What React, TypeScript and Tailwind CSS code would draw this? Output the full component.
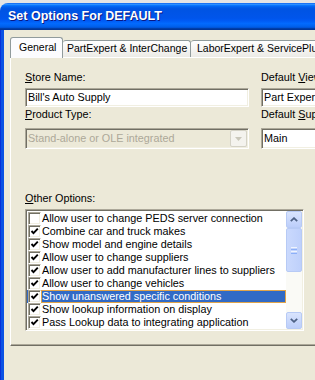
import React from "react";

const options: [string, boolean][] = [
  ["Allow user to change PEDS server connection", false],
  ["Combine car and truck makes", true],
  ["Show model and engine details", true],
  ["Allow user to change suppliers", true],
  ["Allow user to add manufacturer lines to suppliers", true],
  ["Allow user to change vehicles", true],
  ["Show unanswered specific conditions", true],
  ["Show lookup information on display", true],
  ["Pass Lookup data to integrating application", true],
];

const sunken =
  "border border-t-[#ACA899] border-l-[#ACA899] border-b-white border-r-white shadow-[inset_1px_1px_0_#716F64,inset_-1px_-1px_0_#F1EFE2]";

function Label({ hot, rest, className = "" }: { hot: string; rest: string; className?: string }) {
  return (
    <div className={`h-[12px] leading-[12px] text-black ${className}`}>
      <span className="underline underline-offset-[1px]">{hot}</span>
      {rest}
    </div>
  );
}

function Check({ checked }: { checked: boolean }) {
  return (
    <div className={`h-[13px] w-[13px] shrink-0 bg-white ${sunken} flex items-center justify-center`}>
      {checked && (
        <svg width="9" height="9" viewBox="0 0 9 9">
          <path d="M1.5 4 L3.5 6.2 L7.8 1.6" fill="none" stroke="#000" strokeWidth="1.9" />
        </svg>
      )}
    </div>
  );
}

function ScrollButton({ up }: { up: boolean }) {
  return (
    <div className="h-[17px] w-[16px] rounded-[2px] border border-[#B7CAF5] bg-[linear-gradient(to_bottom,#D9E4FD,#BCCEFA)] flex items-center justify-center">
      <svg width="8" height="5" viewBox="0 0 8 5">
        <path
          d={up ? "M0.8 4.2 L4 1.2 L7.2 4.2" : "M0.8 0.8 L4 3.8 L7.2 0.8"}
          fill="none"
          stroke="#4D6185"
          strokeWidth="1.8"
        />
      </svg>
    </div>
  );
}

export default function App() {
  return (
    <div className="h-[380px] w-[315px] overflow-hidden bg-[#E4E4E4] pt-[3px] font-['Liberation_Sans',Arial,sans-serif] text-[10.8px]">
      <div className="flex h-full w-[420px] flex-col">
        {/* title bar */}
        <div className="flex h-[27px] shrink-0 items-center rounded-tl-[8px] bg-[linear-gradient(to_bottom,#0058EE_0%,#3593FF_4%,#288EFF_6%,#127DFF_8%,#036FFC_10%,#0262EE_14%,#0057E5_20%,#0054E3_24%,#0055EB_56%,#005BF5_66%,#026AFE_76%,#0062EF_86%,#0052D6_92%,#0040AB_94%,#003092_100%)] pl-[8px]">
          <span className="text-[12.5px] font-bold text-white [text-shadow:1px_1px_0_#0A1883]">
            Set Options For DEFAULT
          </span>
        </div>

        <div className="flex flex-1">
          <div className="w-[4px] shrink-0 border-l border-[#0831D9] bg-[#0B52E4]" />
          <div className="flex-1 bg-[#ECE9D8] pl-[6px] pt-[7px]">
            {/* tabs */}
            <div className="flex h-[20px] items-end whitespace-nowrap text-[10.5px]">
              <div className="relative z-10 -mb-px flex h-[21px] w-[53px] items-center rounded-t-[3px] border border-b-0 border-[#919B9C] bg-[#FCFCFE] pl-[8px] text-black">
                General
              </div>
              <div className="flex h-[17px] w-[128px] items-center rounded-t-[3px] border border-b-0 border-l-0 border-[#919B9C] bg-[linear-gradient(to_bottom,#FFFFFF,#ECEBE6)] pl-[4px] text-black">
                PartExpert &amp; InterChange
              </div>
              <div className="flex h-[17px] w-[160px] items-center rounded-t-[3px] border border-b-0 border-l-0 border-[#919B9C] bg-[linear-gradient(to_bottom,#FFFFFF,#ECEBE6)] pl-[6px] text-black">
                LaborExpert &amp; ServicePlus
              </div>
            </div>

            {/* panel */}
            <div className="h-[289px] border-l border-t border-b border-l-white border-t-white border-b-[#716F64] shadow-[inset_0_-1px_0_#ACA899] pl-[14px] pt-[13px]">
              <div className="flex gap-[12px]">
                <div className="w-[224px]">
                  <Label hot="S" rest="tore Name:" />
                  <div className={`mt-[5px] flex h-[19px] items-center bg-white pl-[2px] ${sunken}`}>
                    Bill's Auto Supply
                  </div>
                  <Label hot="P" rest="roduct Type:" className="mt-[1px]" />
                  <div className={`mt-[8px] flex h-[21px] items-center bg-[#ECE9D8] pl-[2px] pr-[1px] text-[#ACA899] ${sunken}`}>
                    <span className="flex-1">Stand-alone or OLE integrated</span>
                    <div className="flex h-[17px] w-[17px] items-center justify-center rounded-[2px] border border-[#D4D2C6] bg-[#F4F3EE]">
                      <svg width="7" height="4" viewBox="0 0 7 4">
                        <path d="M0 0 H7 L3.5 4 Z" fill="#C9C7BA" />
                      </svg>
                    </div>
                  </div>
                </div>
                <div className="w-[120px] whitespace-nowrap">
                  <div className="h-[12px] leading-[12px] text-black">
                    Default <span className="underline underline-offset-[1px]">V</span>iew
                  </div>
                  <div className={`mt-[5px] flex h-[19px] items-center bg-white pl-[2px] ${sunken}`}>
                    Part Expert
                  </div>
                  <div className="mt-[1px] h-[12px] leading-[12px] text-black">
                    Default <span className="underline underline-offset-[1px]">S</span>upplier
                  </div>
                  <div className={`mt-[8px] flex h-[21px] items-center bg-white pl-[2px] ${sunken}`}>
                    Main
                  </div>
                </div>
              </div>

              <Label hot="O" rest="ther Options:" className="mt-[43px]" />

              {/* options list */}
              <div className={`mt-[5px] flex h-[122px] w-[279px] bg-white p-[1px] ${sunken}`}>
                <div className="flex flex-1 flex-col pt-[1px]">
                  {options.map(([text, checked], i) => {
                    const selected = i === 6;
                    return (
                      <div
                        key={text}
                        className={`flex h-[13px] items-center pl-[1px] ${selected ? "bg-[#316AC5]" : ""}`}
                      >
                        <Check checked={checked} />
                        <div
                          className={`flex h-[13px] flex-1 items-center whitespace-nowrap leading-[13px] ${
                            selected ? "border border-[#E0A44A] text-white" : "border border-transparent text-black"
                          }`}
                        >
                          {text}
                        </div>
                      </div>
                    );
                  })}
                </div>
                <div className="flex w-[16px] flex-col bg-[#FAFAF6]">
                  <ScrollButton up />
                  <div className="flex-1">
                    <div className="flex h-[44px] w-[16px] flex-col items-center justify-center gap-[1px] rounded-[2px] border border-[#B7CAF5] bg-[linear-gradient(to_right,#CAD9FD,#BED0FB)]">
                      <div className="h-px w-[6px] bg-[#EEF4FE]" />
                      <div className="h-px w-[6px] bg-[#8CB0F8]" />
                      <div className="h-px w-[6px] bg-[#EEF4FE]" />
                      <div className="h-px w-[6px] bg-[#8CB0F8]" />
                    </div>
                  </div>
                  <ScrollButton up={false} />
                </div>
              </div>
            </div>
          </div>
        </div>
      </div>
    </div>
  );
}
